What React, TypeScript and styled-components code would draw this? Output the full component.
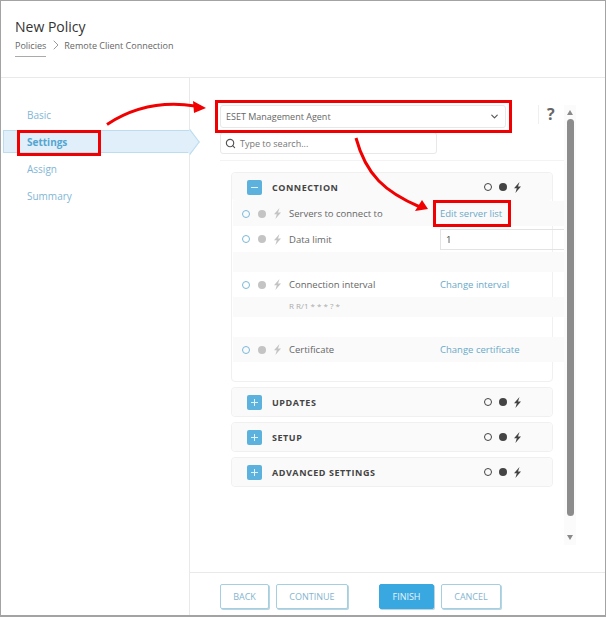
import styled, { createGlobalStyle } from "styled-components";
import { ChevronDown, ChevronRight, Search } from "lucide-react";

const GlobalStyle = createGlobalStyle`
  html, body {
    margin: 0;
    padding: 0;
    background: #fff;
    font-family: "Open Sans", "Liberation Sans", sans-serif;
  }
`;

const Frame = styled.div`
  position: relative;
  box-sizing: border-box;
  width: 606px;
  height: 617px;
  border: 1px solid #a3a3a3;
  border-bottom-width: 2px;
  display: flex;
  flex-direction: column;
  overflow: hidden;
`;

const Header = styled.header`
  height: 77px;
  flex: none;
  box-sizing: border-box;
  padding: 16px 0 0 14px;
  border-bottom: 1px solid #e9e9e9;
`;

const Title = styled.h1`
  margin: 0;
  font-size: 14px;
  line-height: 19px;
  font-weight: 400;
  color: #333;
`;

const Breadcrumbs = styled.div`
  display: flex;
  align-items: center;
  height: 18px;
  margin-top: 0;
  font-size: 9px;
  color: #666;
  svg {
    margin: 0 0 0 2px;
    color: #666;
  }
`;

const Crumb = styled.span`
  position: relative;
  &:first-child::after {
    content: "";
    position: absolute;
    left: 0;
    right: 0;
    bottom: -5px;
    height: 1px;
    background: #aaa;
  }
`;

const Body = styled.div`
  flex: 1;
  min-height: 0;
  display: flex;
`;

const Sidebar = styled.nav`
  width: 189px;
  flex: none;
  box-sizing: border-box;
  border-right: 1px solid #e9e9e9;
  padding-top: 25px;
  display: flex;
  flex-direction: column;
  gap: 4px;
`;

const NavItem = styled.div<{ $active?: boolean }>`
  position: relative;
  z-index: 1;
  height: 23px;
  margin-left: ${(p) => (p.$active ? "2px" : "0")};
  margin-right: ${(p) => (p.$active ? "-1px" : "0")};
  padding-left: ${(p) => (p.$active ? "23px" : "26px")};
  display: flex;
  align-items: center;
  font-size: 10px;
  font-weight: ${(p) => (p.$active ? 700 : 400)};
  color: ${(p) => (p.$active ? "#55a5d2" : "#7fb6d6")};
  background: ${(p) => (p.$active ? "#e0eff9" : "transparent")};
  border: ${(p) => (p.$active ? "1px solid #bcdcef" : "none")};
  border-right: none;
  box-sizing: border-box;
  ${(p) =>
    p.$active &&
    `&::after {
      content: "";
      position: absolute;
      right: -8px;
      top: 3px;
      width: 15px;
      height: 15px;
      background: #e0eff9;
      border-top: 1px solid #bcdcef;
      border-right: 1px solid #bcdcef;
      transform: rotate(45deg) skew(8deg, 8deg);
    }`}
`;

const Main = styled.main`
  flex: 1;
  min-width: 0;
  display: flex;
  flex-direction: column;
`;

const ContentArea = styled.div`
  flex: 1;
  min-height: 0;
  display: flex;
  padding-top: 23px;
`;

const Scroller = styled.div`
  width: 374px;
  flex: none;
  overflow: hidden;
  padding: 4px 0 0 30px;
  box-sizing: border-box;
`;

const FormColumn = styled.div`
  display: flex;
  flex-direction: column;
`;

const SelectRow = styled.div`
  display: flex;
  align-items: center;
`;

const SelectBox = styled.div`
  width: 286px;
  height: 23px;
  box-sizing: border-box;
  border: 1px solid #e8e8e8;
  border-radius: 3px;
  display: flex;
  align-items: center;
  justify-content: space-between;
  padding: 0 5px 0 5px;
  font-size: 9px;
  color: #666;
  svg {
    color: #555;
  }
`;

const HelpMark = styled.div`
  align-self: flex-start;
  margin-left: 32px;
  padding-left: 8px;
  height: 19px;
  border-left: 1px solid #efefef;
  font-size: 16px;
  line-height: 19px;
  font-weight: 700;
  color: #666;
`;

const SearchBox = styled.div`
  width: 217px;
  height: 22px;
  margin-top: 4px;
  box-sizing: border-box;
  border: 1px solid #e8e8e8;
  border-radius: 3px;
  display: flex;
  align-items: center;
  gap: 4px;
  padding-left: 4px;
  font-size: 9px;
  color: #777;
  svg {
    color: #555;
  }
`;

const Divider = styled.div`
  height: 1px;
  margin-top: 6px;
  background: #f3f3f3;
`;

const Panels = styled.div`
  display: flex;
  flex-direction: column;
  gap: 5px;
  margin: 11px 0 0 11px;
  width: 322px;
`;

const Panel = styled.section`
  box-sizing: border-box;
  border: 1px solid #f0f0f0;
  border-radius: 4px;
`;

const PanelHeader = styled.div`
  height: 28px;
  display: flex;
  align-items: center;
  padding-left: 15px;
  background: #fafafa;
  border-radius: 4px;
`;

const ToggleIcon = styled.div`
  width: 15px;
  height: 15px;
  border-radius: 2px;
  background: #5cb2dc;
  position: relative;
  flex: none;
  &::before {
    content: "";
    position: absolute;
    left: 4px;
    right: 4px;
    top: 7px;
    height: 1px;
    background: #dff1fa;
  }
`;

const PlusIcon = styled(ToggleIcon)`
  &::after {
    content: "";
    position: absolute;
    top: 4px;
    bottom: 4px;
    left: 7px;
    width: 1px;
    background: #dff1fa;
  }
`;

const PanelTitle = styled.h2`
  margin: 0 0 0 10px;
  font-size: 9px;
  font-weight: 700;
  letter-spacing: 0.55px;
  color: #444;
  flex: 1;
`;

const Legend = styled.div`
  display: flex;
  align-items: center;
  gap: 6.5px;
  width: 68px;
  flex: none;
`;

const RingDot = styled.span<{ $color: string }>`
  width: 8px;
  height: 8px;
  box-sizing: border-box;
  border-radius: 50%;
  border: 1.3px solid ${(p) => p.$color};
  flex: none;
`;

const SolidDot = styled.span<{ $color: string }>`
  width: 8px;
  height: 8px;
  border-radius: 50%;
  background: ${(p) => p.$color};
  flex: none;
`;

const Rows = styled.div`
  width: 331px;
  margin-left: 1px;
  padding-bottom: 19px;
`;

const Row = styled.div<{ $shaded?: boolean; $tall?: boolean }>`
  height: ${(p) => (p.$tall ? "26px" : "25px")};
  display: flex;
  align-items: center;
  padding-left: 9px;
  background: ${(p) => (p.$shaded ? "#fafafa" : "transparent")};
  font-size: 9.5px;
  color: #666;
`;

const Spacer = styled.div<{ $shaded?: boolean; $height: number }>`
  height: ${(p) => p.$height}px;
  background: ${(p) => (p.$shaded ? "#fafafa" : "transparent")};
`;

const RowStatus = styled(Legend)`
  width: 47px;
  gap: 7.5px;
`;

const RowLabel = styled.span`
  width: 151px;
  flex: none;
`;

const RowLink = styled.span`
  color: #6aa9c9;
`;

const NumberInput = styled.div`
  flex: 1;
  height: 21px;
  box-sizing: border-box;
  border: 1px solid #e3e3e3;
  border-right: none;
  padding-left: 5px;
  line-height: 19px;
  color: #444;
`;

const CronText = styled.div`
  height: 20px;
  padding-left: 56px;
  background: #fafafa;
  font-size: 8px;
  line-height: 18px;
  color: #aaa;
`;

const ScrollTrack = styled.div`
  width: 12px;
  height: 440px;
  margin-top: 4px;
  background: #fbfbfb;
  display: flex;
  flex-direction: column;
  align-items: center;
  padding-top: 5px;
  box-sizing: border-box;
`;

const ScrollArrow = styled.div<{ $down?: boolean }>`
  width: 0;
  height: 0;
  border-left: 3px solid transparent;
  border-right: 3px solid transparent;
  ${(p) =>
    p.$down
      ? "border-top: 5px solid #8a8a8a; margin-top: 19px;"
      : "border-bottom: 5px solid #8a8a8a; margin-bottom: 4px;"}
`;

const ScrollThumb = styled.div`
  width: 7px;
  height: 397px;
  border-radius: 4px;
  background: #8c8c8c;
`;

const Footer = styled.footer`
  height: 43px;
  flex: none;
  box-sizing: border-box;
  border-top: 1px solid #e9e9e9;
  padding: 11px 0 0 30px;
  display: flex;
  align-items: flex-start;
  gap: 7px;
`;

const FooterButton = styled.button<{ $primary?: boolean; $width: number }>`
  width: ${(p) => p.$width}px;
  height: 25px;
  box-sizing: border-box;
  border-radius: 2px;
  border: ${(p) => (p.$primary ? "1px solid #3aa8e0" : "1px solid #a5cfe0")};
  box-shadow: 1px 1px 0 #b9d5e1;
  background: ${(p) => (p.$primary ? "#3aa8e0" : "#fff")};
  color: ${(p) => (p.$primary ? "#e6f5fc" : "#84b5cf")};
  font-family: inherit;
  font-size: 9px;
  padding: 0;
`;

const FinishButton = styled(FooterButton)`
  margin-left: 24px;
`;

const Callout = styled.div<{ $x: number; $y: number; $w: number; $h: number }>`
  position: absolute;
  left: ${(p) => p.$x}px;
  top: ${(p) => p.$y}px;
  width: ${(p) => p.$w}px;
  height: ${(p) => p.$h}px;
  box-sizing: border-box;
  border: 3px solid #f00000;
  z-index: 3;
`;

const ArrowLayer = styled.svg`
  position: absolute;
  left: -1px;
  top: -1px;
  z-index: 4;
  pointer-events: none;
`;

function Bolt({ color }: { color: string }) {
  return (
    <svg width="9" height="11" viewBox="0 0 9 11">
      <path d="M6.5 0 L1 6.2 L3.8 6.2 L2.4 11 L8 4.4 L5 4.4 Z" fill={color} />
    </svg>
  );
}

function Status() {
  return (
    <Legend>
      <RingDot $color="#444" />
      <SolidDot $color="#444" />
      <Bolt color="#444" />
    </Legend>
  );
}

function RowIcons() {
  return (
    <RowStatus>
      <RingDot $color="#7ab8d8" />
      <SolidDot $color="#c4c4c4" />
      <Bolt color="#c4c4c4" />
    </RowStatus>
  );
}

function CollapsedPanel({ title }: { title: string }) {
  return (
    <Panel>
      <PanelHeader>
        <PlusIcon />
        <PanelTitle>{title}</PanelTitle>
        <Status />
      </PanelHeader>
    </Panel>
  );
}

export default function App() {
  return (
    <>
      <GlobalStyle />
      <Frame>
        <Header>
          <Title>New Policy</Title>
          <Breadcrumbs>
            <Crumb>Policies</Crumb>
            <ChevronRight size={16} strokeWidth={1} />
            <Crumb>Remote Client Connection</Crumb>
          </Breadcrumbs>
        </Header>
        <Body>
          <Sidebar>
            <NavItem>Basic</NavItem>
            <NavItem $active>Settings</NavItem>
            <NavItem>Assign</NavItem>
            <NavItem>Summary</NavItem>
          </Sidebar>
          <Main>
            <ContentArea>
              <Scroller>
                <FormColumn>
                  <SelectRow>
                    <SelectBox>
                      ESET Management Agent
                      <ChevronDown size={11} strokeWidth={2.5} />
                    </SelectBox>
                    <HelpMark>?</HelpMark>
                  </SelectRow>
                  <SearchBox>
                    <Search size={11} strokeWidth={2.5} />
                    Type to search...
                  </SearchBox>
                  <Divider />
                  <Panels>
                    <Panel>
                      <PanelHeader>
                        <ToggleIcon />
                        <PanelTitle>CONNECTION</PanelTitle>
                        <Status />
                      </PanelHeader>
                      <Rows>
                        <Row $shaded>
                          <RowIcons />
                          <RowLabel>Servers to connect to</RowLabel>
                          <RowLink>Edit server list</RowLink>
                        </Row>
                        <Row $tall>
                          <RowIcons />
                          <RowLabel>Data limit</RowLabel>
                          <NumberInput>1</NumberInput>
                        </Row>
                        <Spacer $shaded $height={20} />
                        <Row>
                          <RowIcons />
                          <RowLabel>Connection interval</RowLabel>
                          <RowLink>Change interval</RowLink>
                        </Row>
                        <CronText>R R/1 * * * ? *</CronText>
                        <Spacer $height={20} />
                        <Row $shaded>
                          <RowIcons />
                          <RowLabel>Certificate</RowLabel>
                          <RowLink>Change certificate</RowLink>
                        </Row>
                      </Rows>
                    </Panel>
                    <CollapsedPanel title="UPDATES" />
                    <CollapsedPanel title="SETUP" />
                    <CollapsedPanel title="ADVANCED SETTINGS" />
                  </Panels>
                </FormColumn>
              </Scroller>
              <ScrollTrack>
                <ScrollArrow />
                <ScrollThumb />
                <ScrollArrow $down />
              </ScrollTrack>
            </ContentArea>
            <Footer>
              <FooterButton $width={49}>BACK</FooterButton>
              <FooterButton $width={72}>CONTINUE</FooterButton>
              <FinishButton $primary $width={55}>FINISH</FinishButton>
              <FooterButton $width={60}>CANCEL</FooterButton>
            </Footer>
          </Main>
        </Body>
        <Callout $x={16} $y={129} $w={84} $h={26} />
        <Callout $x={214} $y={99} $w={297} $h={33} />
        <Callout $x={432} $y={199} $w={78} $h={27} />
        <ArrowLayer width="606" height="617" viewBox="0 0 606 617">
          <path d="M107 124.5 C132 108 162 101 195 106" fill="none" stroke="#f00000" strokeWidth="3" />
          <path d="M206 108 L193 101 L194 113 Z" fill="#f00000" />
          <path d="M356 138 C366 175 385 192 420 207" fill="none" stroke="#f00000" strokeWidth="3" />
          <path d="M428 209 L422 200 L415 211 Z" fill="#f00000" />
        </ArrowLayer>
      </Frame>
    </>
  );
}
